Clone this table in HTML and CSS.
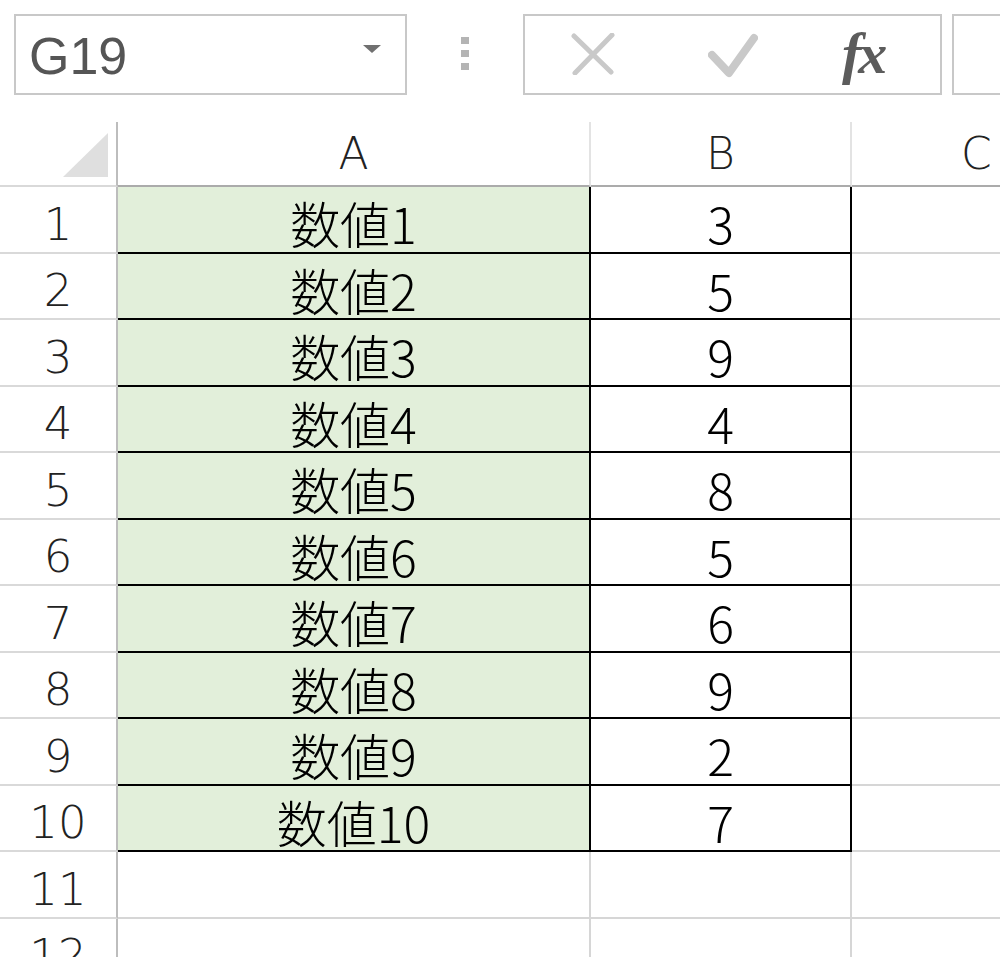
FILE: index.html
```html
<!DOCTYPE html>
<html lang="ja">
<head>
<meta charset="utf-8">
<title>Excel</title>
<link rel="stylesheet" href="styles.css">
</head>
<body>
<div class="toolbar">
  <div class="namebox">
    <span class="name">G19</span>
    <span class="arrow"></span>
  </div>
  <div class="dots"><i></i><i></i><i></i></div>
  <div class="fxbox">
    <svg class="ic-x" width="44" height="42" viewBox="0 0 44 42"><path d="M3 3 L40 39 M41 2 L4 40" stroke="#c9c9c9" stroke-width="5" stroke-linecap="round" fill="none"/></svg>
    <svg class="ic-check" width="50" height="46" viewBox="0 0 50 46"><path d="M4 22 L21 40 L46 5" stroke="#c9c9c9" stroke-width="8" stroke-linecap="round" stroke-linejoin="round" fill="none"/></svg>
    <span class="fx">fx</span>
  </div>
  <div class="formula"></div>
</div>
<div class="sheet">
  <div class="corner"><span class="tri"></span></div>
  <div class="colh">A</div>
  <div class="colh">B</div>
  <div class="colh colc">C</div>

  <div class="rowh">1</div><div class="cell a">数値1</div><div class="cell b">3</div><div class="cell c"></div>
  <div class="rowh">2</div><div class="cell a">数値2</div><div class="cell b">5</div><div class="cell c"></div>
  <div class="rowh">3</div><div class="cell a">数値3</div><div class="cell b">9</div><div class="cell c"></div>
  <div class="rowh">4</div><div class="cell a">数値4</div><div class="cell b">4</div><div class="cell c"></div>
  <div class="rowh">5</div><div class="cell a">数値5</div><div class="cell b">8</div><div class="cell c"></div>
  <div class="rowh">6</div><div class="cell a">数値6</div><div class="cell b">5</div><div class="cell c"></div>
  <div class="rowh">7</div><div class="cell a">数値7</div><div class="cell b">6</div><div class="cell c"></div>
  <div class="rowh">8</div><div class="cell a">数値8</div><div class="cell b">9</div><div class="cell c"></div>
  <div class="rowh">9</div><div class="cell a">数値9</div><div class="cell b">2</div><div class="cell c"></div>
  <div class="rowh">10</div><div class="cell a">数値10</div><div class="cell b">7</div><div class="cell c"></div>
  <div class="rowh">11</div><div class="cell"></div><div class="cell"></div><div class="cell c"></div>
  <div class="rowh">12</div><div class="cell"></div><div class="cell"></div><div class="cell c"></div>
</div>
</body>
</html>
```
FILE: styles.css
```css
* { box-sizing: border-box; }
html, body { margin: 0; padding: 0; }
body {
  width: 1000px;
  height: 957px;
  overflow: hidden;
  background: #fff;
  font-family: "DejaVu Sans", sans-serif;
}
.toolbar {
  height: 122px;
  padding: 14px 0 0 14px;
  display: flex;
  align-items: flex-start;
  white-space: nowrap;
  overflow: hidden;
}
.namebox {
  width: 393px;
  height: 81px;
  border: 2px solid #c8c8c8;
  display: flex;
  align-items: center;
  justify-content: space-between;
  padding: 0 24px 0 13px;
  flex-shrink: 0;
}
.name {
  font-family: "Liberation Sans", sans-serif;
  font-size: 52px;
  color: #555;
  line-height: 1;
  padding-top: 2px;
}
.arrow {
  width: 0; height: 0;
  border-left: 9px solid transparent;
  border-right: 9px solid transparent;
  border-top: 8px solid #707070;
  margin-top: -12px;
}
.dots {
  margin-left: 54px;
  margin-top: 23px;
  display: flex;
  flex-direction: column;
  gap: 6px;
  flex-shrink: 0;
}
.dots i {
  display: block;
  width: 8px;
  height: 7px;
  background: #b4b4b4;
}
.fxbox {
  margin-left: 54px;
  width: 419px;
  height: 81px;
  border: 2px solid #c8c8c8;
  display: flex;
  align-items: center;
  padding-left: 46px;
  flex-shrink: 0;
}
.ic-x { margin-top: -1px; }
.ic-check { margin-left: 93px; margin-top: 2px; }
.fx {
  margin-left: 84px;
  font-family: "Liberation Serif", serif;
  font-style: italic;
  font-weight: bold;
  font-size: 58px;
  color: #5c5c5c;
  line-height: 1;
  margin-top: -2px;
  letter-spacing: -3px;
}
.formula {
  margin-left: 10px;
  width: 100px;
  height: 81px;
  border: 2px solid #c8c8c8;
  flex-shrink: 0;
}
.sheet {
  display: grid;
  grid-template-columns: 118px 473px 261px 148px;
  grid-template-rows: 65px repeat(12, 66.5px);
}
.corner {
  border-right: 2px solid #bdbdbd;
  border-bottom: 2px solid #d9d9d9;
  position: relative;
}
.tri {
  position: absolute;
  left: 63px;
  top: 11px;
  width: 0; height: 0;
  border-left: 45px solid transparent;
  border-bottom: 44px solid #dfdfdf;
}
.colh {
  border-right: 2px solid #e3e3e3;
  border-bottom: 2px solid #ababab;
  display: flex;
  align-items: center;
  justify-content: center;
  font-size: 44px;
  font-weight: 200;
  color: #222;
  line-height: 1;
}
.colh.colc {
  border-right: 0;
  justify-content: flex-start;
  padding-left: 109px;
}
.rowh {
  border-right: 2px solid #bdbdbd;
  border-bottom: 2px solid #d9d9d9;
  display: flex;
  align-items: center;
  justify-content: center;
  font-size: 45px;
  font-weight: 200;
  color: #222;
  line-height: 1;
  padding-top: 10px;
}
.cell {
  border-right: 2px solid #d6d6d6;
  border-bottom: 2px solid #d6d6d6;
  display: flex;
  align-items: center;
  justify-content: center;
  font-family: "Noto Sans CJK JP", sans-serif;
  font-weight: 300;
  font-size: 50px;
  color: #000;
  line-height: 1;
  padding-top: 6px;
}
.cell.c { border-right: 0; }
.cell.a {
  background: #e2efda;
  border-right-color: #000;
  border-bottom-color: #000;
}
.cell.b {
  border-right-color: #000;
  border-bottom-color: #000;
}
```
